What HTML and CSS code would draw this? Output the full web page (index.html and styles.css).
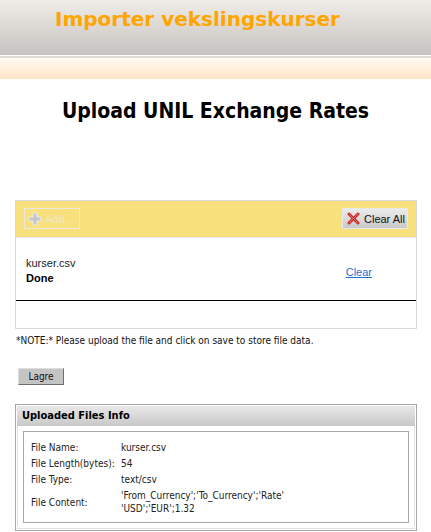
FILE: index.html
```html
<!DOCTYPE html>
<html>
<head>
<meta charset="utf-8">
<link rel="stylesheet" href="styles.css">
</head>
<body>
<div class="topbar"><h1 class="apptitle">Importer vekslingskurser</h1></div>
<div class="sep"></div>
<div class="peach"></div>
<h2 class="pagetitle">Upload UNIL Exchange Rates</h2>
<div class="uploader">
  <div class="toolbar">
    <span class="btn-add"><svg class="plus" width="14" height="14" viewBox="0 0 14 14"><path d="M5 1h4v4h4v4h-4v4h-4v-4h-4v-4h4z" fill="#c8c8c8" stroke="#ececec" stroke-width="1"/></svg>Add...</span>
    <span class="btn-clear"><svg class="x" width="13" height="13" viewBox="0 0 13 13"><path d="M2 2L11 11M11 2L2 11" stroke="#c62828" stroke-width="3" stroke-linecap="round"/><path d="M2 2L11 11M11 2L2 11" stroke="#e57373" stroke-width="1" stroke-linecap="round"/></svg>Clear All</span>
  </div>
  <div class="filerow">
    <div class="fileinfo">
      <div class="fname">kurser.csv</div>
      <div class="fstatus">Done</div>
    </div>
    <a class="clearlink" href="#">Clear</a>
  </div>
  <div class="rule"></div>
  <div class="dropzone"></div>
</div>
<p class="note">*NOTE:* Please upload the file and click on save to store file data.</p>
<button class="save">Lagre</button>
<div class="panel">
  <div class="panelhead">Uploaded Files Info</div>
  <div class="panelbody">
    <div class="infobox">
      <div class="row"><span class="lbl">File Name:</span><span class="val">kurser.csv</span></div>
      <div class="row"><span class="lbl">File Length(bytes):</span><span class="val">54</span></div>
      <div class="row"><span class="lbl">File Type:</span><span class="val">text/csv</span></div>
      <div class="row content"><span class="lbl">File Content:</span><span class="val">'From_Currency';'To_Currency';'Rate'<br>'USD';'EUR';1.32</span></div>
    </div>
  </div>
</div>
</body>
</html>
```
FILE: styles.css
```css
* { box-sizing: border-box; }
body {
  margin: 0;
  font-family: "DejaVu Sans Condensed", "DejaVu Sans", sans-serif;
  font-size: 10px;
  color: #000;
  background: #fff;
}
.topbar {
  height: 55px;
  background: linear-gradient(#f0ede9, #c5c2bf);
  padding-left: 55px;
}
.apptitle {
  margin: 0;
  padding-top: 6px;
  font-family: "DejaVu Sans", sans-serif;
  font-size: 20px;
  font-weight: bold;
  color: #ffa500;
  line-height: 26px;
}
.sep {
  height: 3px;
  border-top: 1px solid #fff;
  background: #dedbd8;
}
.peach {
  height: 21px;
  background: linear-gradient(#fffaf2, #fde4c6);
}
.pagetitle {
  margin: 18px 0 0;
  text-align: center;
  font-size: 21px;
  line-height: 28px;
  font-weight: bold;
}
.uploader {
  margin: 75px 14px 0 15px;
  border: 1px solid #d9d9d9;
  height: 129px;
  font-family: "Liberation Sans", Arial, sans-serif;
  font-size: 11px;
}
.toolbar {
  height: 37px;
  background: #f8e07d;
  border-bottom: 1px solid #e6e6e6;
  display: flex;
  justify-content: space-between;
  align-items: flex-start;
  padding: 7px 8px 0 8px;
}
.btn-add {
  display: flex;
  align-items: center;
  gap: 3px;
  height: 21px;
  width: 56px;
  border: 1px solid #e9e9e2;
  color: #efe7c6;
  padding-left: 3px;
  font-size: 11px;
}
.btn-clear {
  display: flex;
  align-items: center;
  gap: 4px;
  height: 21px;
  width: 66px;
  border: 1px solid #e8e8e8;
  background: linear-gradient(#ececec, #c9c9c9);
  color: #111;
  padding-left: 4px;
  font-size: 11px;
}
.filerow {
  height: 62px;
  display: flex;
  justify-content: space-between;
  align-items: center;
  padding: 4px 44px 0 10px;
}
.fname { line-height: 15px; color: #222; }
.fstatus { line-height: 15px; font-weight: bold; }
.clearlink {
  color: #1a73d9;
  text-decoration: underline;
  margin-top: 2px;
}
.rule {
  height: 1px;
  background: #000;
}
.note {
  margin: 5px 0 0 16px;
  line-height: 13px;
  color: #111;
}
.save {
  display: block;
  margin: 21px 0 0 18px;
  width: 46px;
  height: 17px;
  padding: 0;
  font-family: "DejaVu Sans Condensed", "DejaVu Sans", sans-serif;
  font-size: 10px;
  color: #111;
  background: #c4c4c4;
  border: 1px solid;
  border-color: #dedede #6f6f6f #6f6f6f #dedede;
}
.panel {
  margin: 19px 14px 0 15px;
  border: 1px solid #a8a8a4;
  padding: 1px;
}
.panelhead {
  height: 20px;
  line-height: 20px;
  padding-left: 5px;
  font-weight: bold;
  font-size: 11px;
  background: linear-gradient(#e8e8e8, #c8c8c8);
}
.panelbody {
  border: 1px solid #e2e2e2;
  border-top: none;
  padding: 5px;
}
.infobox {
  border: 1px solid #a6a6a2;
  padding: 7px;
}
.row {
  display: flex;
  align-items: center;
  min-height: 16px;
  line-height: 13px;
  white-space: nowrap;
}
.lbl { width: 90px; color: #222; }
.val { color: #222; }
.row.content { margin-top: 2px; }
```
